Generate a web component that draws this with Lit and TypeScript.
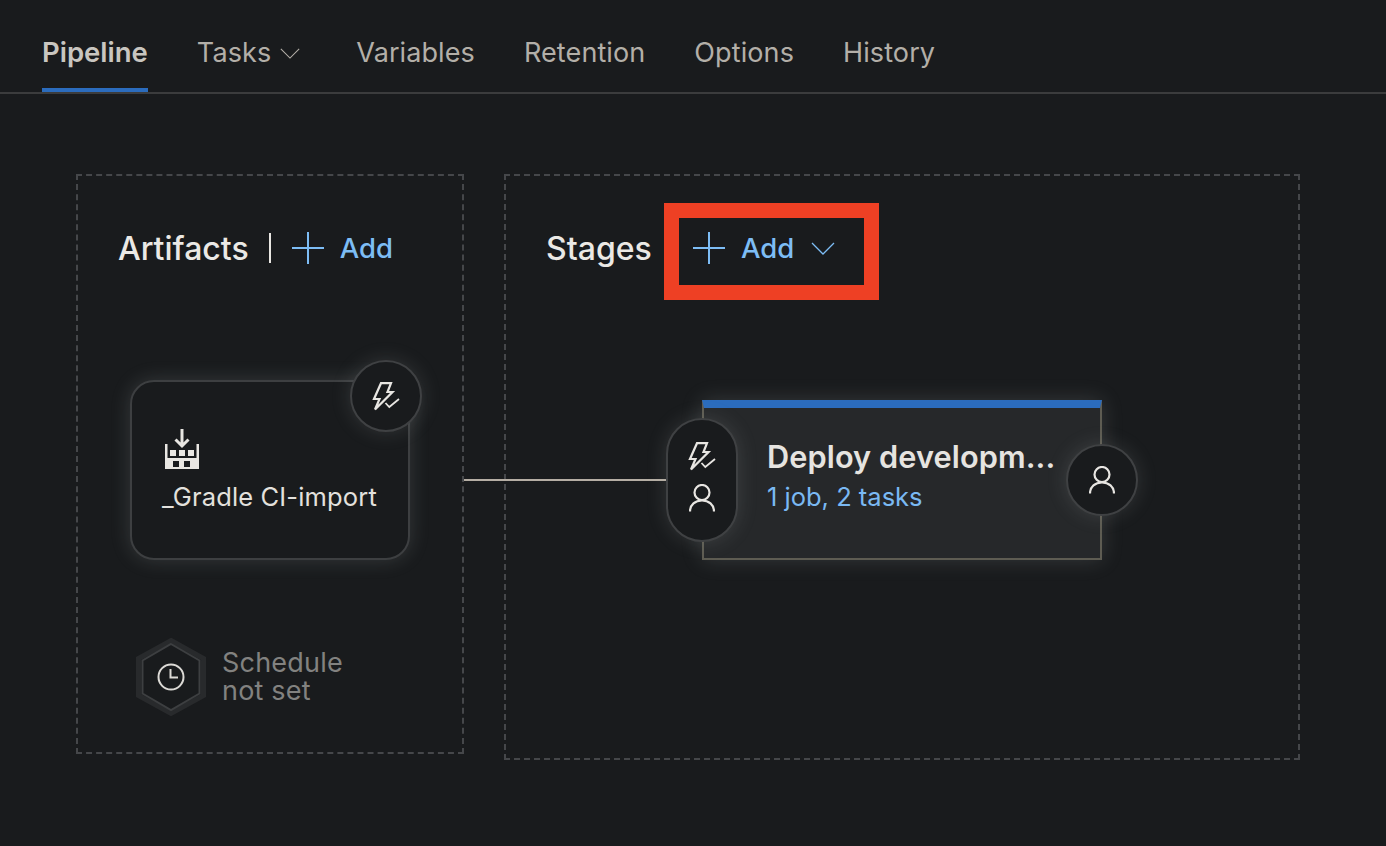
import { LitElement, html, css, svg } from "lit";
import { customElement } from "lit/decorators.js";

const bolt = svg`<path d="M9 1.200H19L15.500 10H20.500L3 27.500L7.500 17H2Z" fill="none" stroke="currentColor" stroke-width="2.200" stroke-linejoin="miter"/>
<path d="M13.500 21l3.800 4L27 17" fill="none" stroke="#191b1d" stroke-width="6"/>
<path d="M13.500 21l3.800 4L27 17" fill="none" stroke="currentColor" stroke-width="1.800"/>`;

const boltIcon = html`<svg class="bolt" viewBox="0 0 28 29" width="28" height="29">${bolt}</svg>`;
const userIcon = html`<svg class="user" viewBox="0 0 26 28" width="26" height="28" fill="none" stroke="currentColor" stroke-width="2.200">
  <circle cx="13" cy="8.500" r="7.500"/><path d="M1 27.500c0-6.800 5.300-11 12-11s12 4.200 12 11"/>
</svg>`;
const plusIcon = html`<svg class="plus" viewBox="0 0 34 34" width="34" height="34" stroke="currentColor" stroke-width="2"><path d="M17 1v32M1 17h32"/></svg>`;
const chevron = (w: number) => html`<svg class="chev" viewBox="0 0 24 13" width=${w} height=${Math.round((w * 13) / 24)} fill="none" stroke="currentColor" stroke-width="1.300"><path d="M1 1l11 11L23 1"/></svg>`;

@customElement("app-root")
export class AppRoot extends LitElement {
  static styles = css`
    :host { display: block; width: 1386px; height: 846px; background: #191b1d; overflow: hidden;
      font-family: Inter, "Liberation Sans", sans-serif; color: #e8e6e2; }
    * { box-sizing: border-box; }
    .tabs { display: flex; height: 94px; padding-left: 42px; gap: 49px; border-bottom: 2px solid #3b3c3d; }
    .tab { display: flex; align-items: center; gap: 9px; height: 92px; padding-top: 12px; font-size: 27px; letter-spacing: 0.1px; color: #b3afa8; position: relative; }
    .tab.active { color: #c9c6c0; font-weight: 600; font-size: 27.500px; letter-spacing: 0; box-shadow: inset 0 -4px 0 #2b6cbd; }
    .tab.menu { margin-right: 7px; }
    .tab .chev { margin-top: 2px; }
    .main { display: flex; gap: 40px; padding: 80px 0 0 76px; align-items: flex-start; }
    .panel { position: relative; border: 2px dashed #45474a; }
    .artifacts { width: 388px; height: 580px; }
    .stages { width: 796px; height: 586px; }
    .head { display: flex; align-items: center; height: 34px; margin-top: 55px; padding-left: 40px; font-size: 32px; font-weight: 500; color: #ebe9e5; }
    .sep { width: 2px; height: 30px; background: #e8e6e2; margin: 0 20px 0 20px; }
    .add { display: flex; align-items: center; color: #7dbdf5; font-size: 27.500px; font-weight: 500; }
    .add .plus { margin-right: 15px; }
    .redbox { position: absolute; left: 158px; top: 27px; width: 215px; height: 97px; border: 15px solid #ee4024; display: flex; align-items: center; padding: 0 0 7px 13px; }
    .redbox .chev { margin-left: 17px; }
    .card { position: absolute; left: 52px; top: 204px; width: 280px; height: 180px; border: 2px solid #3d3f41; border-radius: 24px; background: #191b1d;
      box-shadow: 0 0 20px rgba(170,180,180,0.2); padding: 47px 0 0 30px; }
    .factory { display: block; margin-left: 2px; }
    .card .name { font-size: 25.500px; line-height: 30px; margin-top: 13px; letter-spacing: 0.15px; color: #e3e1dd; white-space: nowrap; }
    .badge { position: absolute; width: 72px; height: 72px; border-radius: 36px; border: 2px solid #3f4143; background: #191b1d;
      display: flex; flex-direction: column; align-items: center; justify-content: center; color: #e8e6e2; box-shadow: 0 0 20px rgba(170,180,180,0.18); }
    .b1 { left: 272px; top: 184px; }
    .sched { position: absolute; left: 57px; top: 461px; display: flex; align-items: center; gap: 15px; }
    .hextext { font-size: 27px; line-height: 28px; color: #828280; letter-spacing: 0.2px; }
    .conn { position: absolute; left: 464px; top: 479px; width: 202px; height: 2px; background: #b5aea4; }
    .stage { position: absolute; left: 196px; top: 224px; width: 400px; height: 160px; background: #26282a; border: 2px solid #5e5c52; border-top: 8px solid #2b6cbd;
      box-shadow: 0 0 20px rgba(170,180,180,0.2); padding: 31px 0 0 63px; }
    .stage .title { font-size: 30.700px; line-height: 36px; font-weight: 600; letter-spacing: 0.1px; color: #e6e4e0; white-space: nowrap; }
    .stage .sub { font-size: 25.500px; line-height: 30px; margin-top: 7px; color: #7ab9f3; }
    .pill { left: 160px; top: 242px; height: 124px; gap: 13px; padding-bottom: 6px; }
    .b2 { left: 560px; top: 268px; }
  `;

  render() {
    return html`
      <div class="tabs">
        <div class="tab active">Pipeline</div>
        <div class="tab menu">Tasks ${chevron(20)}</div>
        <div class="tab">Variables</div>
        <div class="tab">Retention</div>
        <div class="tab">Options</div>
        <div class="tab">History</div>
      </div>
      <div class="main">
        <section class="panel artifacts">
          <div class="head">Artifacts<span class="sep"></span><span class="add">${plusIcon}Add</span></div>
          <div class="card">
            <svg class="factory" viewBox="0 0 36 40" width="36" height="40">
              <path d="M18 0v17M11.500 10.500l6.500 6.500 6.500-6.500" fill="none" stroke="#e8e6e2" stroke-width="3"/>
              <path fill-rule="evenodd" fill="#e8e6e2" d="M1 15h2.500v14h29v-14H35v25H1zM9 32v6h6v-6zM20 32v6h6v-6z"/>
              <path fill="#e8e6e2" d="M6 21h6v6H6zM15 21h6v6h-6zM24 21h6v6h-6z"/>
            </svg>
            <div class="name">_Gradle CI-import</div>
          </div>
          <div class="badge b1">${boltIcon}</div>
          <div class="sched">
            <svg viewBox="0 0 72 80" width="72" height="80">
              <path d="M36 3.500L68.500 21.500V58.500L36 76.500L3.500 58.500V21.500Z" fill="none" stroke="#282a2c" stroke-width="5"/>
              <path d="M36 7L64.500 23.500V56.500L36 73L7.500 56.500V23.500Z" fill="#191b1d" stroke="#3d3f41" stroke-width="2"/>
              <circle cx="36" cy="40" r="12.500" fill="none" stroke="#dcdad6" stroke-width="2"/>
              <path d="M35.500 32v8.500H43" fill="none" stroke="#dcdad6" stroke-width="2"/>
            </svg>
            <div class="hextext">Schedule<br />not set</div>
          </div>
        </section>
        <section class="panel stages">
          <div class="head">Stages</div>
          <div class="redbox add">${plusIcon}Add${chevron(24)}</div>
          <div class="stage">
            <div class="title">Deploy developm...</div>
            <div class="sub">1 job, 2 tasks</div>
          </div>
          <div class="badge pill">${boltIcon}${userIcon}</div>
          <div class="badge b2">${userIcon}</div>
        </section>
        <div class="conn"></div>
      </div>
    `;
  }
}
